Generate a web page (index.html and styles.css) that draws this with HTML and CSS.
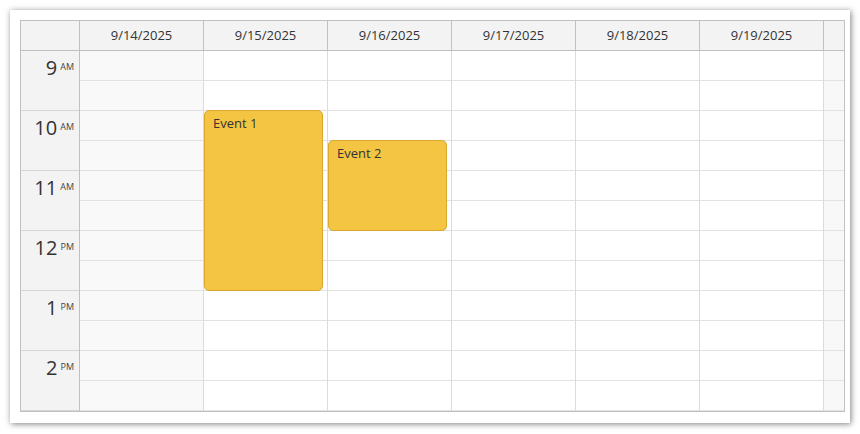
FILE: index.html
```html
<!DOCTYPE html>
<html>
<head>
<meta charset="utf-8">
<link rel="stylesheet" href="styles.css">
</head>
<body>
<div class="page">
  <div class="frame">
    <div class="cal">
      <div class="hcell corner"></div>
      <div class="hcell">9/14/2025</div>
      <div class="hcell">9/15/2025</div>
      <div class="hcell">9/16/2025</div>
      <div class="hcell">9/17/2025</div>
      <div class="hcell">9/18/2025</div>
      <div class="hcell">9/19/2025</div>
      <div class="hcell filler"></div>

      <div class="rowheader">
        <div class="hour"><span class="h">9</span><span class="ampm">AM</span></div>
        <div class="hour"><span class="h">10</span><span class="ampm">AM</span></div>
        <div class="hour"><span class="h">11</span><span class="ampm">AM</span></div>
        <div class="hour"><span class="h">12</span><span class="ampm">PM</span></div>
        <div class="hour"><span class="h">1</span><span class="ampm">PM</span></div>
        <div class="hour"><span class="h">2</span><span class="ampm">PM</span></div>
      </div>

      <div class="col weekend">
        <div class="c"></div><div class="c"></div><div class="c"></div><div class="c"></div>
        <div class="c"></div><div class="c"></div><div class="c"></div><div class="c"></div>
        <div class="c"></div><div class="c"></div><div class="c"></div><div class="c"></div>
      </div>
      <div class="col">
        <div class="c"></div><div class="c"></div><div class="c"></div><div class="c"></div>
        <div class="c"></div><div class="c"></div><div class="c"></div><div class="c"></div>
        <div class="c"></div><div class="c"></div><div class="c"></div><div class="c"></div>
        <div class="event ev1">Event 1</div>
      </div>
      <div class="col">
        <div class="c"></div><div class="c"></div><div class="c"></div><div class="c"></div>
        <div class="c"></div><div class="c"></div><div class="c"></div><div class="c"></div>
        <div class="c"></div><div class="c"></div><div class="c"></div><div class="c"></div>
        <div class="event ev2">Event 2</div>
      </div>
      <div class="col">
        <div class="c"></div><div class="c"></div><div class="c"></div><div class="c"></div>
        <div class="c"></div><div class="c"></div><div class="c"></div><div class="c"></div>
        <div class="c"></div><div class="c"></div><div class="c"></div><div class="c"></div>
      </div>
      <div class="col">
        <div class="c"></div><div class="c"></div><div class="c"></div><div class="c"></div>
        <div class="c"></div><div class="c"></div><div class="c"></div><div class="c"></div>
        <div class="c"></div><div class="c"></div><div class="c"></div><div class="c"></div>
      </div>
      <div class="col">
        <div class="c"></div><div class="c"></div><div class="c"></div><div class="c"></div>
        <div class="c"></div><div class="c"></div><div class="c"></div><div class="c"></div>
        <div class="c"></div><div class="c"></div><div class="c"></div><div class="c"></div>
      </div>
      <div class="col scroll">
        <div class="c"></div><div class="c"></div><div class="c"></div><div class="c"></div>
        <div class="c"></div><div class="c"></div><div class="c"></div><div class="c"></div>
        <div class="c"></div><div class="c"></div><div class="c"></div><div class="c"></div>
      </div>
    </div>
  </div>
</div>
</body>
</html>
```

FILE: styles.css
```css
* { box-sizing: border-box; }
html, body { margin: 0; padding: 0; background: #fff; }
body { font-family: "Open Sans", "Noto Sans", sans-serif; color: #333; }

.page { padding: 10px; }

.frame {
  width: 840px;
  height: 413px;
  background: #fff;
  box-shadow: 1px 1px 6px rgba(0, 0, 0, 0.5);
  padding: 10px 5px 12px 10px;
}

.cal {
  width: 825px;
  border: 1px solid #c0c0c0;
  display: grid;
  grid-template-columns: 59px repeat(6, 124px) 20px;
  grid-template-rows: 30px 360px;
}

.hcell {
  background: #f3f3f3;
  border-right: 1px solid #c0c0c0;
  border-bottom: 1px solid #c0c0c0;
  display: flex;
  align-items: center;
  justify-content: center;
  font-size: 13px;
  color: #333;
  padding-bottom: 1px;
}
.hcell.filler { border-right: none; }

.rowheader {
  background: #f3f3f3;
  border-right: 1px solid #c0c0c0;
  display: flex;
  flex-direction: column;
}

.hour {
  height: 60px;
  border-bottom: 1px solid #d6d6d6;
  display: flex;
  justify-content: flex-end;
  align-items: flex-start;
  padding: 5px 5px 0 0;
  color: #333;
}
.hour .h { font-size: 20px; line-height: 24px; }
.hour .ampm { font-size: 9px; line-height: 12px; margin: 5px 0 0 3px; color: #444; }

.col {
  position: relative;
  border-right: 1px solid #dcdcdc;
  display: flex;
  flex-direction: column;
  background: #fff;
}
.col.weekend { background: #f9f9f9; }
.col.scroll { background: #f8f8f8; border-right: none; }

.c {
  height: 30px;
  border-bottom: 1px solid #e2e2e2;
}

.event {
  position: absolute;
  left: 0;
  width: 119px;
  background: #f4c542;
  border: 1px solid #d8a72c;
  border-radius: 5px;
  font-size: 13px;
  line-height: 17px;
  color: #333;
  padding: 4px 8px;
}
.ev1 { top: 59px; height: 181px; }
.ev2 { top: 89px; height: 91px; }
```
